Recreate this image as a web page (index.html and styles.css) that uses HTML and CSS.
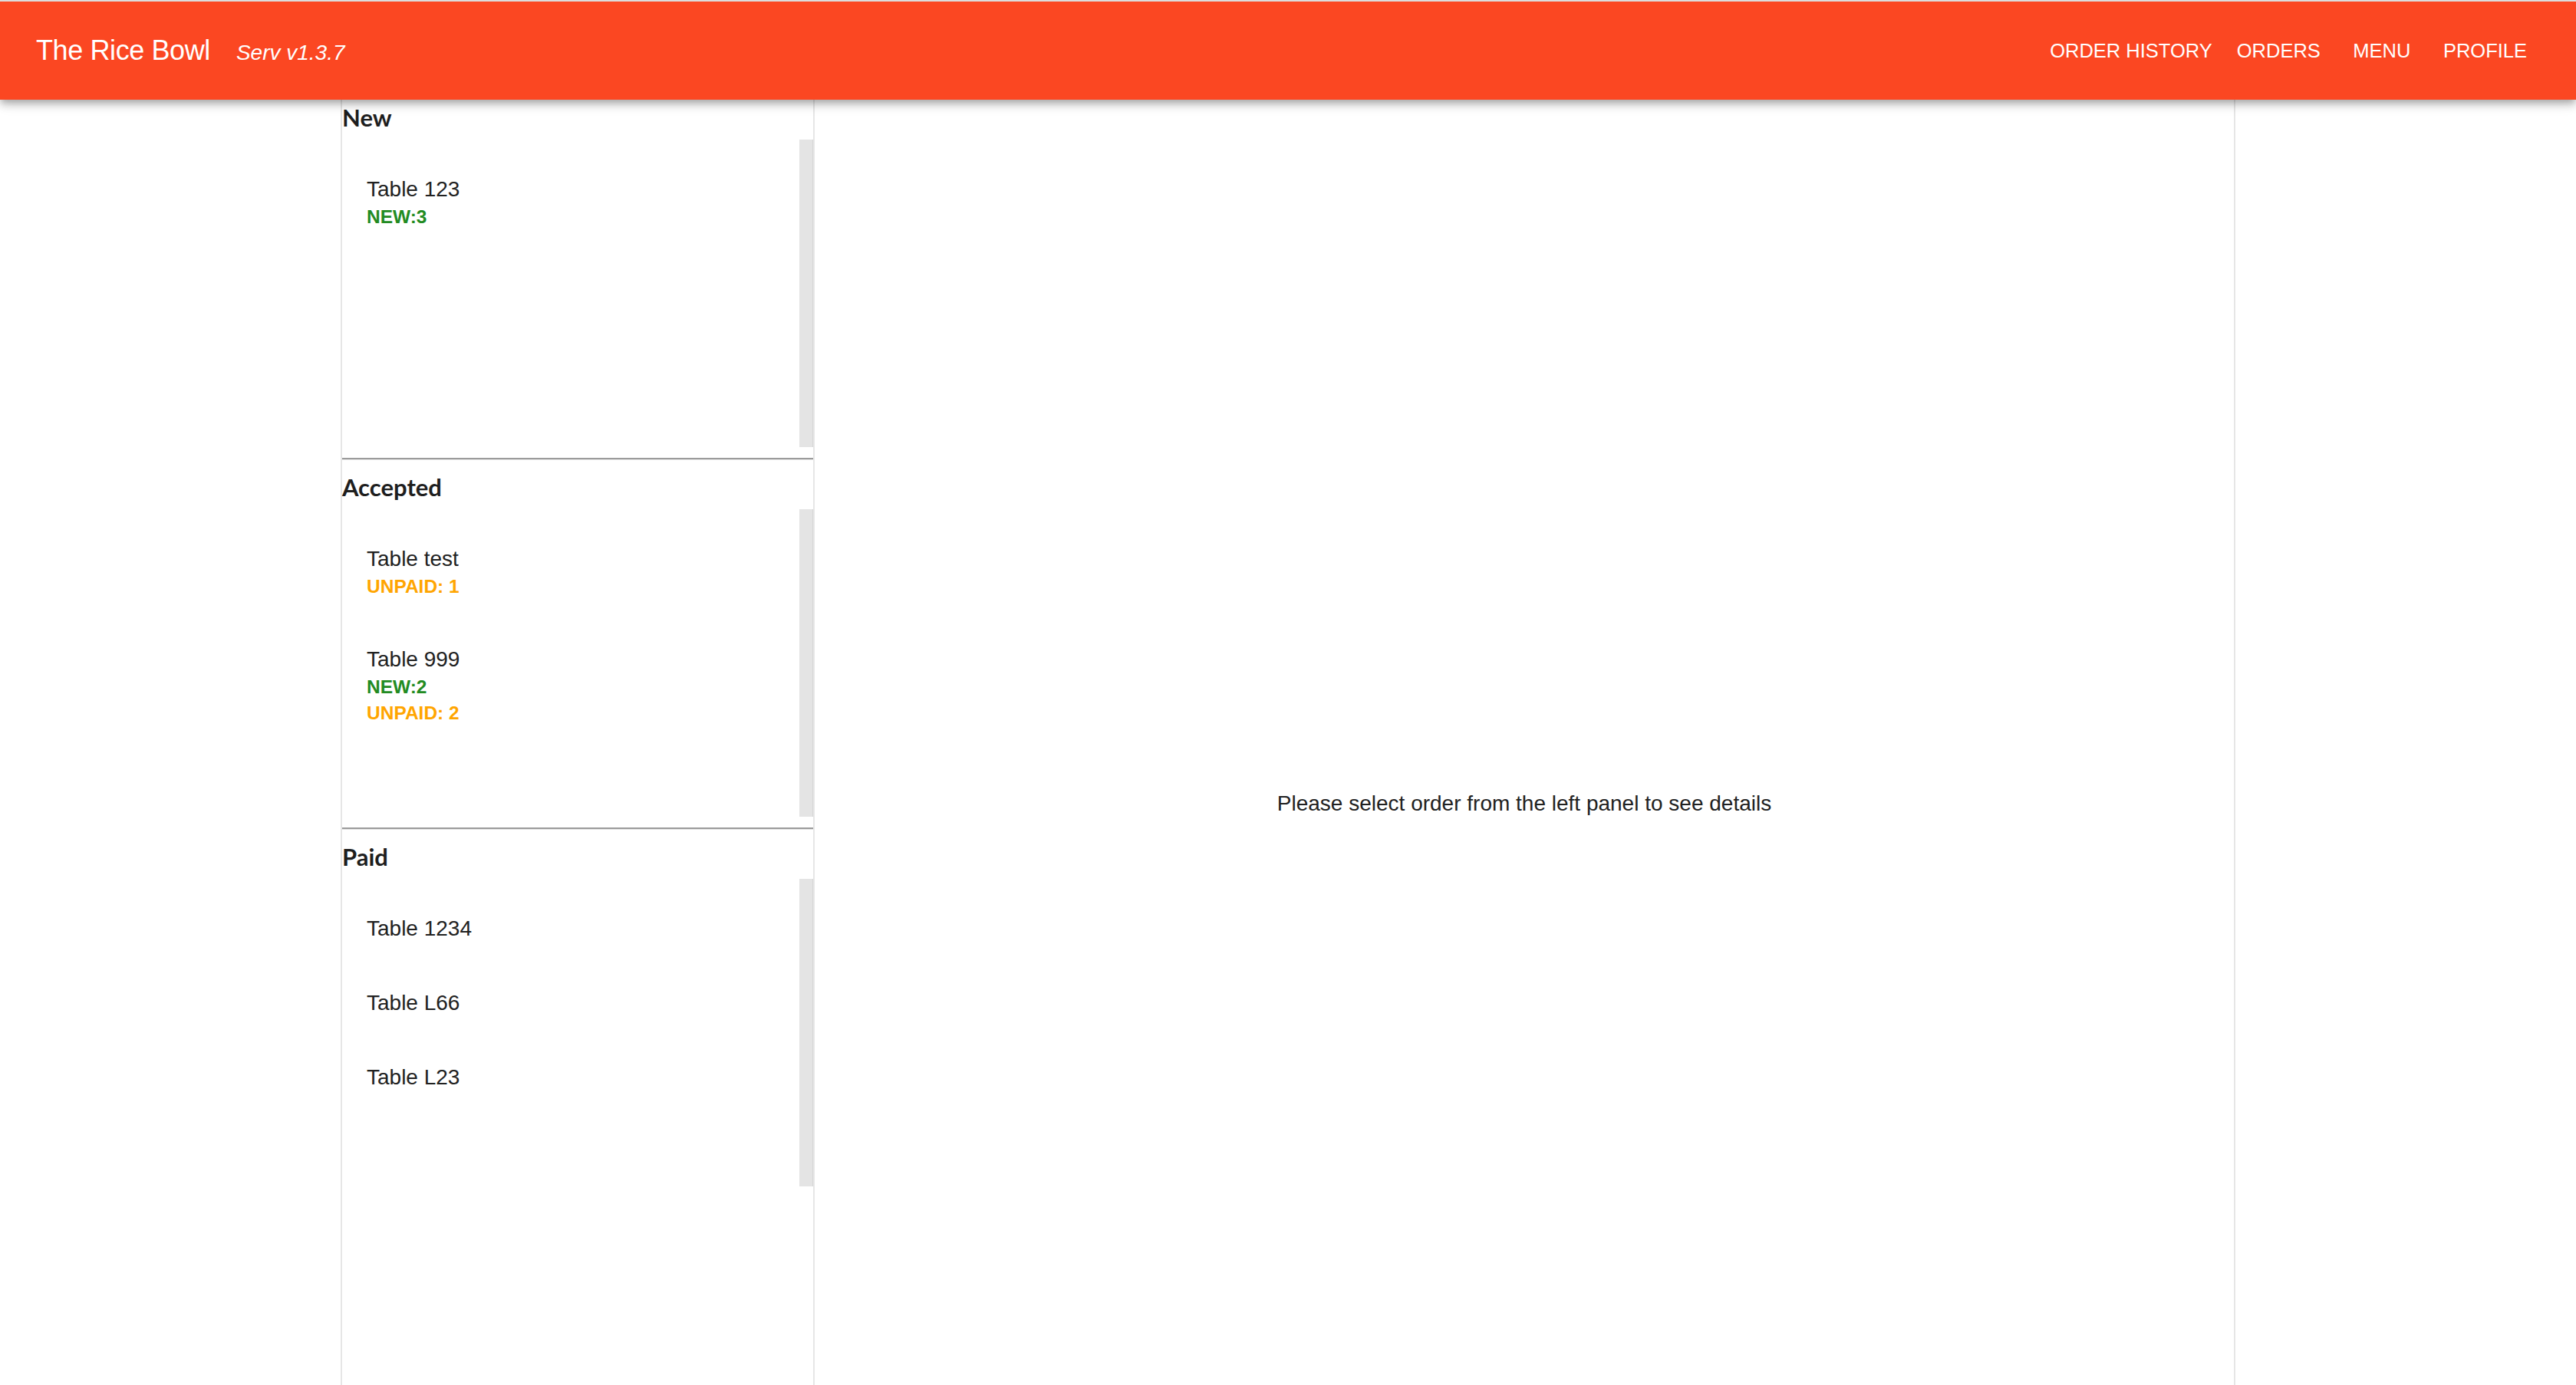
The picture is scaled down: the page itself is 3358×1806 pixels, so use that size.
FILE: index.html
```html
<!DOCTYPE html>
<html lang="en">
<head>
<meta charset="utf-8">
<title>The Rice Bowl - Serv</title>
<link rel="stylesheet" href="styles.css">
</head>
<body>
<header class="appbar">
  <div class="brand">
    <span class="title">The Rice Bowl</span>
    <span class="version">Serv v1.3.7</span>
  </div>
  <nav class="nav">
    <a class="nav-btn">ORDER HISTORY</a>
    <a class="nav-btn">ORDERS</a>
    <a class="nav-btn">MENU</a>
    <a class="nav-btn">PROFILE</a>
  </nav>
</header>
<main class="layout">
  <aside class="sidebar">
    <section class="group group-first">
      <h2 class="group-title">New</h2>
      <div class="list-box">
        <ul class="orders">
          <li class="order">
            <div class="order-name">Table 123</div>
            <div class="badge badge-new">NEW:3</div>
          </li>
        </ul>
        <div class="track"></div>
      </div>
    </section>
    <hr class="divider">
    <section class="group">
      <h2 class="group-title">Accepted</h2>
      <div class="list-box">
        <ul class="orders">
          <li class="order">
            <div class="order-name">Table test</div>
            <div class="badge badge-unpaid">UNPAID: 1</div>
          </li>
          <li class="order">
            <div class="order-name">Table 999</div>
            <div class="badge badge-new">NEW:2</div>
            <div class="badge badge-unpaid">UNPAID: 2</div>
          </li>
        </ul>
        <div class="track"></div>
      </div>
    </section>
    <hr class="divider">
    <section class="group">
      <h2 class="group-title">Paid</h2>
      <div class="list-box">
        <ul class="orders">
          <li class="order"><div class="order-name">Table 1234</div></li>
          <li class="order"><div class="order-name">Table L66</div></li>
          <li class="order"><div class="order-name">Table L23</div></li>
        </ul>
        <div class="track"></div>
      </div>
    </section>
  </aside>
  <section class="detail">
    <p class="hint">Please select order from the left panel to see details</p>
  </section>
</main>
</body>
</html>
```
FILE: styles.css
```css
html, body {
  margin: 0;
  padding: 0;
}
body {
  overflow: hidden;
  background: #ffffff;
  color: #212121;
  font-family: "Liberation Sans", Arial, Helvetica, sans-serif;
  border-top: 2px solid #dcdcdc;
}

/* App bar */
.appbar {
  position: relative;
  z-index: 2;
  height: 128px;
  box-sizing: border-box;
  padding: 0 48px 0 47px;
  display: flex;
  align-items: center;
  justify-content: space-between;
  background: #fb4722;
  color: #ffffff;
  box-shadow: 0 4px 8px -2px rgba(0,0,0,0.2), 0 8px 10px 0 rgba(0,0,0,0.14), 0 2px 20px 0 rgba(0,0,0,0.12);
}
.brand {
  display: flex;
  align-items: baseline;
}
.title {
  font-size: 36px;
  letter-spacing: -0.4px;
}
.version {
  margin-left: 34px;
  font-size: 28px;
  font-style: italic;
  position: relative;
}
.nav {
  display: flex;
  align-items: center;
}
.nav-btn {
  min-width: 128px;
  box-sizing: border-box;
  padding: 0 16px;
  text-align: center;
  font-size: 25.5px;
  line-height: 44px;
  color: #ffffff;
  cursor: pointer;
}

/* Layout */
.layout {
  width: 2470px;
  margin: 0 auto;
  display: grid;
  grid-template-columns: 618px 1fr;
}
.sidebar {
  border-left: 2px solid #e6e6e6;
  border-right: 2px solid #e6e6e6;
}
.group-title {
  margin: 0 0 11px;
  font-family: Lato, "Liberation Sans", sans-serif;
  font-weight: 700;
  font-size: 31px;
  line-height: 36px;
  color: #1e1e1e;
}
.group-first .group-title {
  margin-top: 5px;
}
.divider + .group .group-title {
  margin-top: 17px;
}
.divider {
  margin: 14px 0 0;
  height: 0;
  border: 0;
  border-top: 2px solid #9b9b9b;
  border-bottom: 1px solid #e8e8e8;
}
.list-box {
  display: flex;
  height: 401px;
}
.orders {
  flex: 1;
  margin: 0;
  padding: 16px 0 0;
  list-style: none;
  overflow: hidden;
}
.track {
  width: 18px;
  background: #e4e4e4;
  box-shadow: inset -1px 0 0 #d6d6d6;
}
.order {
  padding: 29px 32px;
}
.order-name {
  font-size: 28px;
  line-height: 39px;
  color: #212121;
}
.badge {
  font-size: 24.5px;
  font-weight: 700;
  line-height: 34px;
}
.badge-new {
  color: #228b22;
}
.badge-unpaid {
  color: #ffa500;
}

/* Detail panel */
.detail {
  height: calc(100vh - 130px);
  box-sizing: border-box;
  padding-top: 160px;
  border-right: 2px solid #e6e6e6;
  display: flex;
  align-items: center;
  justify-content: center;
}
.hint {
  margin: 0;
  font-size: 28px;
  line-height: 32px;
  color: #212121;
}
```
